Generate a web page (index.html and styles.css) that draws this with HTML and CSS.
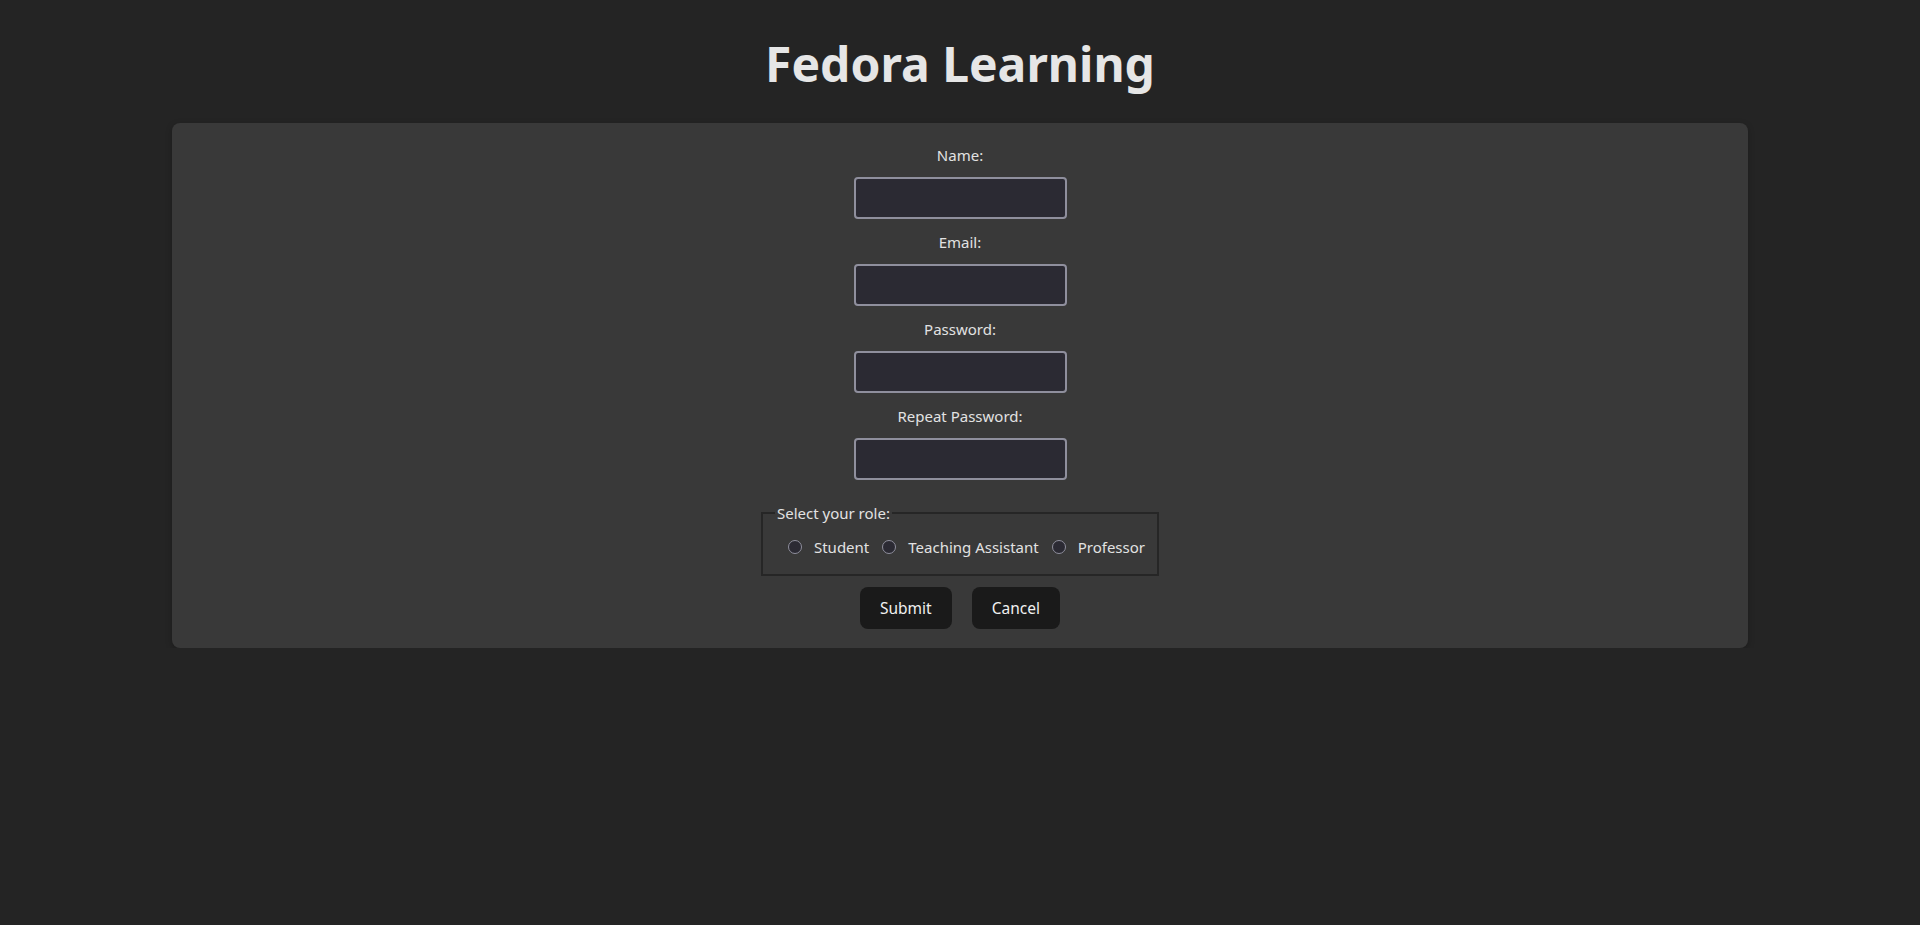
FILE: index.html
```html
<!DOCTYPE html>
<html lang="en">
<head>
<meta charset="utf-8">
<title>Fedora Learning</title>
<link rel="stylesheet" href="styles.css">
</head>
<body>
<h1 class="title">Fedora Learning</h1>
<main class="card">
  <form class="form">
    <label class="field-label" for="name">Name:</label>
    <input class="field-input" id="name" type="text">
    <label class="field-label" for="email">Email:</label>
    <input class="field-input" id="email" type="email">
    <label class="field-label" for="pw">Password:</label>
    <input class="field-input" id="pw" type="password">
    <label class="field-label" for="pw2">Repeat Password:</label>
    <input class="field-input" id="pw2" type="password">
    <fieldset class="roles">
      <legend class="roles-legend">Select your role:</legend>
      <div class="roles-row">
        <label class="role"><input class="radio" type="radio" name="role"><span>Student</span></label>
        <label class="role"><input class="radio" type="radio" name="role"><span>Teaching Assistant</span></label>
        <label class="role"><input class="radio" type="radio" name="role"><span>Professor</span></label>
      </div>
    </fieldset>
    <div class="actions">
      <button class="btn" type="submit">Submit</button>
      <button class="btn" type="button">Cancel</button>
    </div>
  </form>
</main>
</body>
</html>
```
FILE: styles.css
```css
* { box-sizing: border-box; }
html, body { margin: 0; }
body {
  background: #242424;
  color: rgba(255,255,255,0.87);
  font-family: "Noto Sans", "Open Sans", sans-serif;
  font-size: 15px;
  line-height: 24px;
}
.title {
  margin: 0;
  padding-top: 36px;
  height: 123px;
  text-align: center;
  font-size: 48px;
  line-height: 56px;
  font-weight: 700;
  color: #e6e6e6;
}
.card {
  width: 1576px;
  margin: 0 auto;
  background: #393939;
  border-radius: 8px;
  box-shadow: 0 2px 6px rgba(0,0,0,0.25);
  padding: 20px 0 19px;
}
.form {
  display: flex;
  flex-direction: column;
  align-items: center;
}
.field-label {
  display: block;
  height: 24px;
  color: #e2e2e2;
}
.field-input {
  width: 213px;
  height: 42px;
  margin: 10px 0 11px;
  background: #2b2a33;
  border: 2px solid #8f8f9d;
  border-radius: 4px;
  color: #fff;
  font: inherit;
  padding: 0 8px;
}
.roles {
  margin: 10px 0 0;
  padding: 0 12px 15px;
  border: 2px solid #262626;
  min-width: 0;
}
.roles-legend {
  padding: 0 2px;
  color: #e2e2e2;
  line-height: 24px;
}
.roles-row {
  display: flex;
  align-items: center;
  height: 24px;
  margin-top: 10px;
}
.role {
  display: flex;
  align-items: center;
  color: #e2e2e2;
}
.radio {
  appearance: none;
  -webkit-appearance: none;
  width: 14px;
  height: 14px;
  margin: 0 12px 0 13px;
  border: 1px solid #8f8f9d;
  border-radius: 50%;
  background: #2b2a33;
}
.actions {
  display: flex;
  gap: 20px;
  margin-top: 11px;
}
.btn {
  height: 42px;
  padding: 0 19px;
  border: 1px solid transparent;
  border-radius: 8px;
  background: #1a1a1a;
  color: #f0f0f0;
  font: inherit;
  font-size: 15.5px;
  font-weight: 400;
}
```
